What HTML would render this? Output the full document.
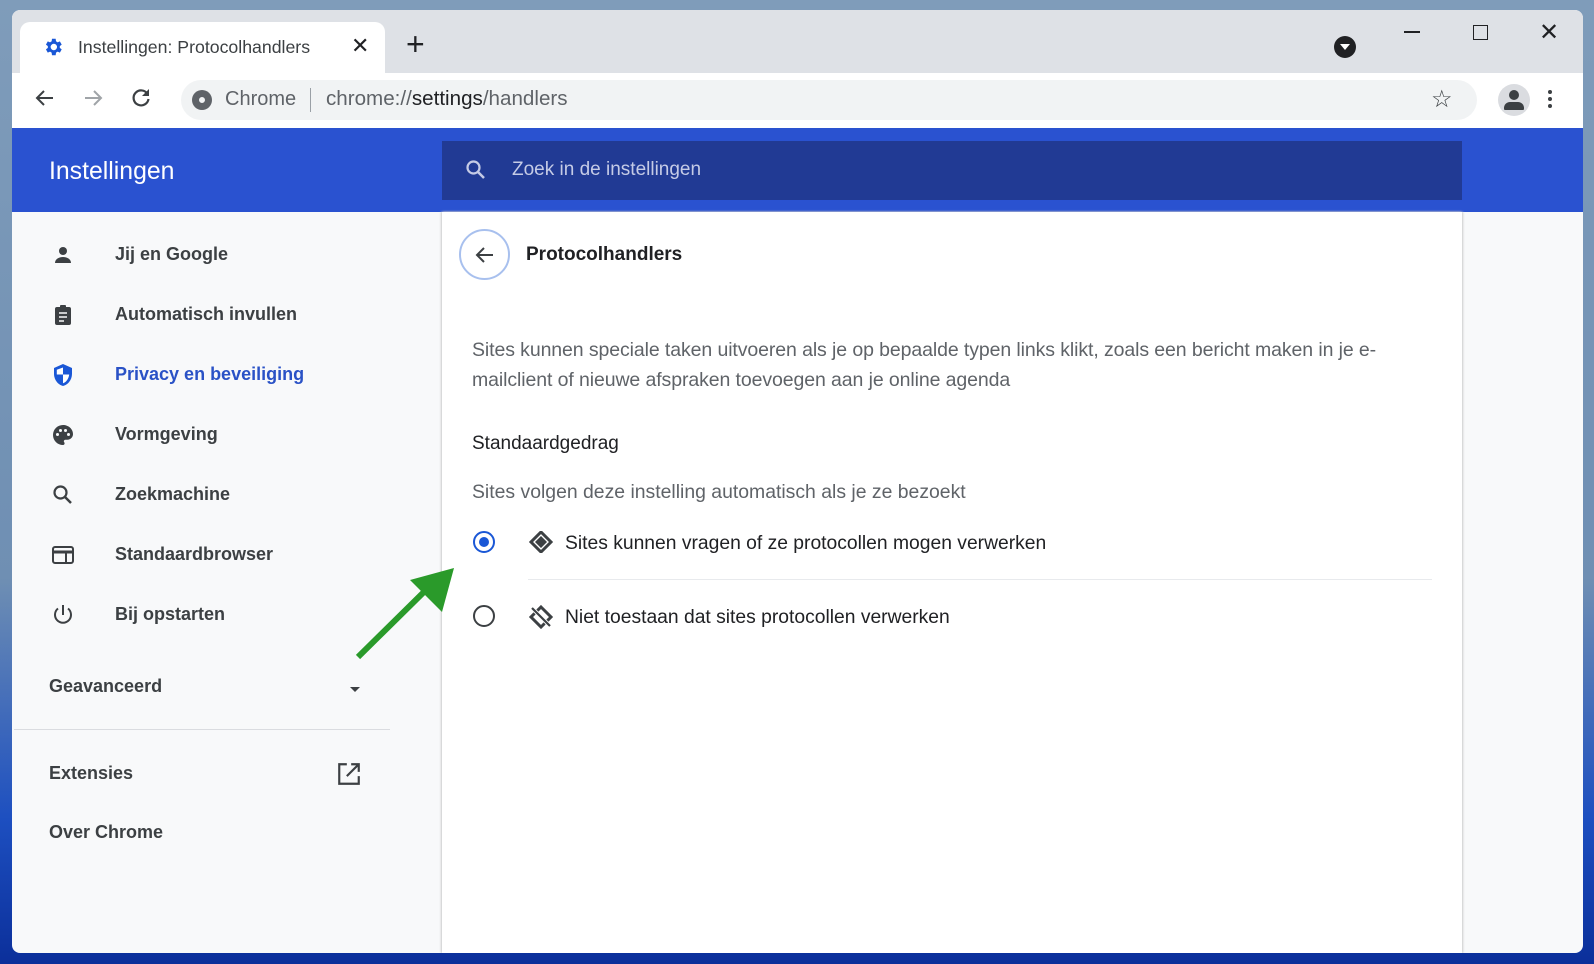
<!DOCTYPE html>
<html><head><meta charset="utf-8"><style>
*{margin:0;padding:0;box-sizing:border-box}
body{width:1594px;height:964px;overflow:hidden;position:relative;font-family:"Liberation Sans",sans-serif;background:linear-gradient(180deg,#7f9cba 0%,#6f8fb3 60%,#1d4fc0 85%,#0b2f9a 100%)}
.a{position:absolute}
.t{position:absolute;white-space:nowrap}
.s{font-size:18px;color:#3c4043;font-weight:bold}
</style></head><body>
<div class="a" style="left:12px;top:10px;width:1571px;height:943px;background:#f8f9fa;border-radius:8px;overflow:hidden">
 <div class="a" style="left:0;top:0;width:1571px;height:63px;background:#dee1e6"></div>
 <div class="a" style="left:8px;top:12px;width:365px;height:52px;background:#fff;border-radius:10px 10px 0 0"></div>
 <svg class="a" style="left:30px;top:26px" width="22" height="22" viewBox="0 0 24 24"><path fill="#1a57d6" d="M19.4 13a7.5 7.5 0 0 0 0-2l2.1-1.6-2-3.5-2.5 1a7 7 0 0 0-1.7-1L14.9 3h-4l-.4 2.9a7 7 0 0 0-1.700 1l-2.5-1-2 3.5L6.4 11a7.5 7.5 0 0 0 0 2l-2.1 1.6 2 3.5 2.5-1a7 7 0 0 0 1.7 1l.4 2.9h4l.4-2.9a7 7 0 0 0 1.7-1l2.5 1 2-3.5zM12.9 15.5a3.5 3.5 0 1 1 0-7 3.5 3.5 0 0 1 0 7z"/></svg>
 <div class="t" style="left:66px;top:27px;font-size:17.7px;color:#3c4043">Instellingen: Protocolhandlers</div>
 <div class="t" style="left:339px;top:23px;font-size:22px;color:#202124">✕</div>
 <div class="t" style="left:394px;top:16px;font-size:32px;color:#202124;font-weight:300">+</div>
 <div class="a" style="left:1322px;top:26px;width:22px;height:22px;border-radius:50%;background:#202124"></div>
 <div class="a" style="left:1328px;top:34px;width:0;height:0;border-left:5px solid transparent;border-right:5px solid transparent;border-top:6px solid #fff"></div>
 <div class="a" style="left:1392px;top:21px;width:16px;height:2px;background:#202124"></div>
 <div class="a" style="left:1461px;top:15px;width:15px;height:15px;border:1.5px solid #202124"></div>
 <div class="t" style="left:1527px;top:8px;font-size:24px;color:#202124">✕</div>
 <div class="a" style="left:0;top:63px;width:1571px;height:55px;background:#fff"></div>
 <svg class="a" style="left:21px;top:76px" width="24" height="24" viewBox="0 0 24 24"><path d="M20 12H5M11 5l-7 7 7 7" stroke="#3c4043" stroke-width="2" fill="none"/></svg>
 <svg class="a" style="left:69px;top:76px" width="24" height="24" viewBox="0 0 24 24"><path d="M4 12h15M13 5l7 7-7 7" stroke="#a0a4a8" stroke-width="2" fill="none"/></svg>
 <svg class="a" style="left:117px;top:76px" width="24" height="24" viewBox="0 0 24 24"><path d="M18.5 8A7.5 7.5 0 1 0 19.5 13" stroke="#3c4043" stroke-width="2.2" fill="none"/><path d="M20 3v7h-7z" fill="#3c4043"/></svg>
 <div class="a" style="left:169px;top:70px;width:1296px;height:40px;border-radius:20px;background:#f1f3f4"></div>
 <div class="a" style="left:180px;top:80px;width:20px;height:20px;border-radius:50%;background:#5f6368"></div>
 <div class="a" style="left:186px;top:86px;width:8px;height:8px;border-radius:50%;background:#f1f3f4;border:1.5px solid #5f6368"></div>
 <div class="t" style="left:213px;top:78px;font-size:20px;color:#5f6368">Chrome</div>
 <div class="a" style="left:298px;top:78px;width:1px;height:24px;background:#9aa0a6"></div>
 <div class="t" style="left:314px;top:77px;font-size:20.6px;color:#5f6368">chrome://<span style="color:#202124">settings</span>/handlers</div>
 <div class="t" style="left:1419px;top:75px;font-size:24px;color:#3c4043">☆</div>
 <div class="a" style="left:1486px;top:74px;width:32px;height:32px;border-radius:50%;background:#dadce0"></div>
 <div class="a" style="left:1497px;top:80px;width:10px;height:10px;border-radius:50%;background:#3c4043"></div>
 <div class="a" style="left:1492px;top:92px;width:20px;height:8px;border-radius:6px 6px 1px 1px;background:#3c4043"></div>
 <div class="a" style="left:1536px;top:80px;width:4px;height:4px;border-radius:50%;background:#3c4043;box-shadow:0 7px 0 #3c4043,0 14px 0 #3c4043"></div>
 <div class="a" style="left:0;top:118px;width:1571px;height:84px;background:#2a52d0"></div>
 <div class="t" style="left:37px;top:148px;font-size:24.8px;color:#fff">Instellingen</div>
 <div class="a" style="left:430px;top:131px;width:1020px;height:59px;background:#213a94"></div>
 <svg class="a" style="left:452px;top:148px" width="24" height="24" viewBox="0 0 24 24"><circle cx="9.5" cy="9.5" r="6" stroke="#c5cbe6" stroke-width="2.2" fill="none"/><path d="M14 14l6 6" stroke="#c5cbe6" stroke-width="2.5"/></svg>
 <div class="t" style="left:500px;top:149px;font-size:19px;color:#c5cbe6">Zoek in de instellingen</div>
 <div class="a" style="left:430px;top:202px;width:1020px;height:741px;background:#fff;box-shadow:-1px 0 2px #ccc,1px 0 2px #ccc"></div>
 <div class="a" style="left:447px;top:219px;width:51px;height:51px;border-radius:50%;border:2px solid #a8c0ee"></div>
 <svg class="a" style="left:461px;top:233px" width="24" height="24" viewBox="0 0 24 24"><path d="M20 12H5M11 5l-7 7 7 7" stroke="#3c4043" stroke-width="2" fill="none"/></svg>
 <div class="t" style="left:514px;top:234px;font-size:19px;color:#202124;font-weight:bold">Protocolhandlers</div>
 <div class="t" style="left:460px;top:325px;font-size:19.5px;color:#5f6368;line-height:30px;letter-spacing:-0.1px">Sites kunnen speciale taken uitvoeren als je op bepaalde typen links klikt, zoals een bericht maken in je e-<br>mailclient of nieuwe afspraken toevoegen aan je online agenda</div>
 <div class="t" style="left:460px;top:423px;font-size:19px;color:#202124">Standaardgedrag</div>
 <div class="t" style="left:460px;top:471px;font-size:19.4px;color:#5f6368">Sites volgen deze instelling automatisch als je ze bezoekt</div>
 <div class="a" style="left:461px;top:521px;width:22px;height:22px;border-radius:50%;border:2.5px solid #1a57d6"></div>
 <div class="a" style="left:467px;top:527px;width:10px;height:10px;border-radius:50%;background:#1a57d6"></div>
 <svg class="a" style="left:517px;top:521px" width="24" height="22" viewBox="0 0 24 22"><path d="M12 1l10 10-10 10L2 11z" fill="none" stroke="#3c4043" stroke-width="3"/><path d="M12 5l6 6-6 6-6-6z" fill="#3c4043"/></svg>
 <div class="t" style="left:553px;top:523px;font-size:19.3px;color:#202124">Sites kunnen vragen of ze protocollen mogen verwerken</div>
 <div class="a" style="left:516px;top:569px;width:904px;height:1px;background:#e8eaed"></div>
 <div class="a" style="left:461px;top:595px;width:22px;height:22px;border-radius:50%;border:2.5px solid #3c4043"></div>
 <svg class="a" style="left:517px;top:595px" width="24" height="24" viewBox="0 0 24 24"><path d="M12 2l10 10-10 10L2 12z" fill="none" stroke="#3c4043" stroke-width="3"/><path d="M3 3l18 18" stroke="#fff" stroke-width="4"/><path d="M3 3l18 18" stroke="#3c4043" stroke-width="2.2"/></svg>
 <div class="t" style="left:553px;top:597px;font-size:19.3px;color:#202124">Niet toestaan dat sites protocollen verwerken</div>
 <svg class="a" style="left:39px;top:233px" width="24" height="24" viewBox="0 0 24 24"><circle cx="12" cy="8" r="4" fill="#3c4043"/><path d="M4 20c0-4 4-6 8-6s8 2 8 6z" fill="#3c4043"/></svg>
 <svg class="a" style="left:39px;top:293px" width="24" height="24" viewBox="0 0 24 24"><rect x="4" y="4" width="16" height="18" rx="2" fill="#3c4043"/><rect x="9" y="2" width="6" height="4" rx="1" fill="#3c4043"/><path d="M8 10h8M8 14h8M8 18h5" stroke="#f8f9fa" stroke-width="1.6"/></svg>
 <svg class="a" style="left:39px;top:353px" width="24" height="24" viewBox="0 0 24 24"><path d="M12 1L3 5v6c0 5.5 3.8 10.7 9 12 5.2-1.3 9-6.5 9-12V5z" fill="#1a57d6"/><path d="M12 4.5v7H5.8V6.8zM12 11.5h6.2c-.5 4.1-3 7.8-6.2 8.8z" fill="#fff"/></svg>
 <svg class="a" style="left:39px;top:413px" width="24" height="24" viewBox="0 0 24 24"><path d="M12 2a10 10 0 0 0 0 20c1 0 1.6-.8 1.6-1.6 0-.5-.2-.8-.4-1.100-.2-.3-.4-.6-.4-1 0-.9.7-1.6 1.6-1.6h2A5.6 5.6 0 0 0 22 11c0-5-4.5-9-10-9z" fill="#3c4043"/><circle cx="6.5" cy="11.5" r="1.5" fill="#f8f9fa"/><circle cx="9.5" cy="7.5" r="1.5" fill="#f8f9fa"/><circle cx="14.5" cy="7.5" r="1.5" fill="#f8f9fa"/><circle cx="17.5" cy="11.5" r="1.5" fill="#f8f9fa"/></svg>
 <svg class="a" style="left:39px;top:473px" width="24" height="24" viewBox="0 0 24 24"><circle cx="9.5" cy="9.5" r="6" stroke="#3c4043" stroke-width="2.2" fill="none"/><path d="M14 14l6 6" stroke="#3c4043" stroke-width="2.5"/></svg>
 <svg class="a" style="left:39px;top:533px" width="24" height="24" viewBox="0 0 24 24"><rect x="2" y="4" width="20" height="16" rx="2" fill="none" stroke="#3c4043" stroke-width="2"/><path d="M2 9h20" stroke="#3c4043" stroke-width="3"/><path d="M15 9v10" stroke="#3c4043" stroke-width="2"/></svg>
 <svg class="a" style="left:39px;top:593px" width="24" height="24" viewBox="0 0 24 24"><path d="M12 2v10" stroke="#3c4043" stroke-width="2"/><path d="M7 5.5a8 8 0 1 0 10 0" stroke="#3c4043" stroke-width="2" fill="none"/></svg>
 <div class="t s" style="left:103px;top:234px">Jij en Google</div>
 <div class="t s" style="left:103px;top:294px">Automatisch invullen</div>
 <div class="t s" style="left:103px;top:354px;color:#2a52c6">Privacy en beveiliging</div>
 <div class="t s" style="left:103px;top:414px">Vormgeving</div>
 <div class="t s" style="left:103px;top:474px">Zoekmachine</div>
 <div class="t s" style="left:103px;top:534px">Standaardbrowser</div>
 <div class="t s" style="left:103px;top:594px">Bij opstarten</div>
 <div class="t s" style="left:37px;top:666px">Geavanceerd</div>
 <div class="a" style="left:338px;top:677px;width:0;height:0;border-left:5px solid transparent;border-right:5px solid transparent;border-top:5px solid #3c4043"></div>
 <div class="a" style="left:2px;top:719px;width:376px;height:1px;background:#dadce0"></div>
 <div class="t s" style="left:37px;top:753px">Extensies</div>
 <svg class="a" style="left:324px;top:751px" width="26" height="26" viewBox="0 0 24 24"><path d="M10 3H3v18h18v-7" stroke="#3c4043" stroke-width="2" fill="none"/><path d="M14 3h7v7M21 3L10 14" stroke="#3c4043" stroke-width="2" fill="none"/></svg>
 <div class="t s" style="left:37px;top:812px">Over Chrome</div>
</div>
<svg class="a" style="left:0;top:0" width="1594" height="964"><path d="M358 657L430 586" stroke="#2a9a2a" stroke-width="6"/><path d="M454 568L410 580L442 612z" fill="#2a9a2a"/></svg>
</body></html>
